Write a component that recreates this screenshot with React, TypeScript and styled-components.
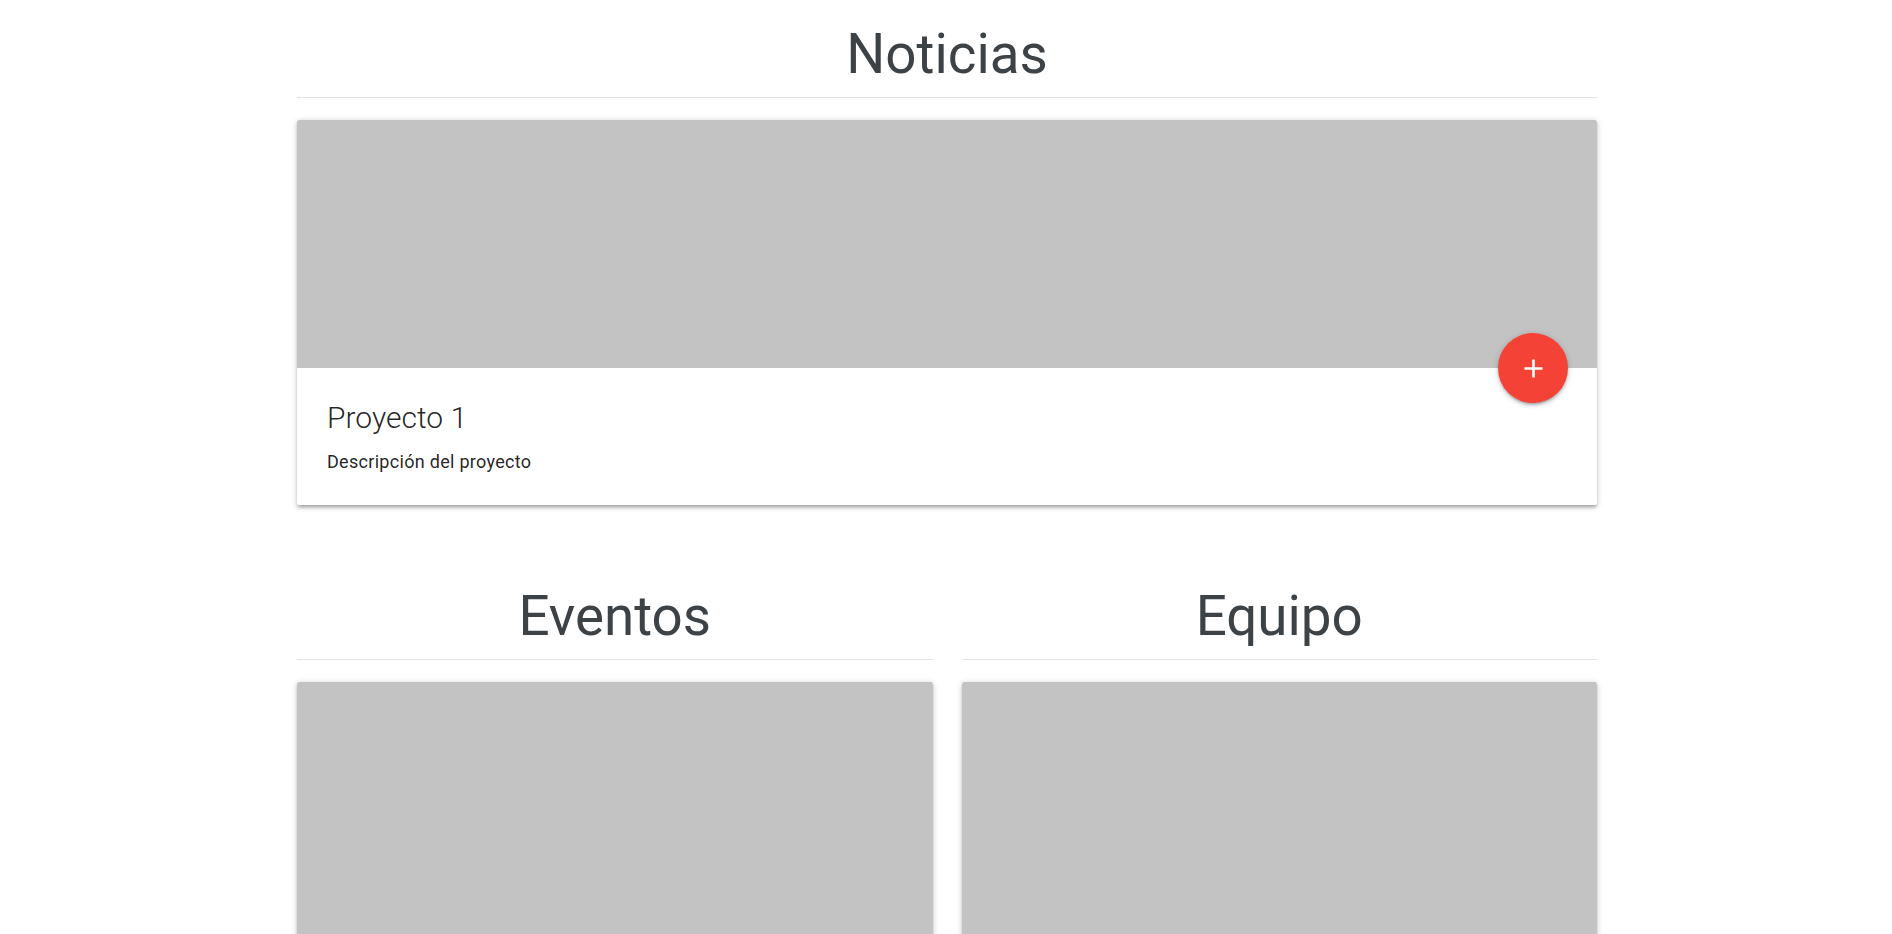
import React from "react";
import styled, { createGlobalStyle } from "styled-components";

const GlobalStyle = createGlobalStyle`
  html, body {
    margin: 0;
    padding: 0;
    background: #ffffff;
  }
  body {
    font-family: Roboto, "Noto Sans", "Liberation Sans", sans-serif;
    color: rgba(0, 0, 0, 0.87);
  }
  * { box-sizing: border-box; }
`;

const Page = styled.main`
  width: 1302px;
  margin: 0 auto;
  padding: 24px 0 0 2px;
`;

const Section = styled.section`
  display: flex;
  flex-direction: column;
  min-width: 0;
`;

const ColumnsRow = styled.div`
  display: grid;
  grid-template-columns: 1fr 1fr;
  column-gap: 29px;
  margin-top: 81px;
`;

const SectionTitle = styled.h3`
  margin: 0;
  font-size: 54.75px;
  line-height: 60px;
  font-weight: 400;
  text-align: center;
  color: #3d4246;
`;

const Divider = styled.hr`
  margin: 13px 0 0;
  border: none;
  height: 1px;
  background: #e3e3e3;
`;

const Card = styled.article`
  position: relative;
  margin-top: 22px;
  background: #ffffff;
  border-radius: 2.5px;
  box-shadow: 0 2.5px 2.5px 0 rgba(0, 0, 0, 0.14),
    0 3.75px 1.25px -2.5px rgba(0, 0, 0, 0.12),
    0 1.25px 6.25px 0 rgba(0, 0, 0, 0.2);
`;

const CardImage = styled.div<{ $height: number }>`
  position: relative;
  height: ${(p) => p.$height}px;
  background: #c3c3c3;
  border-radius: 2.5px 2.5px 0 0;
`;

const CardContent = styled.div`
  padding: 30px;
`;

const CardTitle = styled.span`
  display: block;
  font-size: 30px;
  font-weight: 300;
  line-height: 40px;
  margin-bottom: 10px;
  color: rgba(0, 0, 0, 0.87);
`;

const CardText = styled.p`
  margin: 0;
  font-size: 18px;
  letter-spacing: 0.3px;
  line-height: 27px;
  color: rgba(0, 0, 0, 0.87);
`;

const Fab = styled.button`
  position: absolute;
  right: 29px;
  bottom: -35px;
  width: 70px;
  height: 70px;
  border: none;
  border-radius: 50%;
  padding: 0;
  background: #f44336;
  display: flex;
  align-items: center;
  justify-content: center;
  cursor: pointer;
  box-shadow: 0 2.5px 2.5px 0 rgba(0, 0, 0, 0.14),
    0 3.75px 1.25px -2.5px rgba(0, 0, 0, 0.12),
    0 1.25px 6.25px 0 rgba(0, 0, 0, 0.2);
`;

const AddIcon = () => (
  <svg width="31" height="31" viewBox="0 0 24 24" aria-hidden="true">
    <path fill="#ffffff" d="M19 13h-6v6h-2v-6H5v-2h6V5h2v6h6v2z" />
  </svg>
);

export default function App() {
  return (
    <>
      <GlobalStyle />
      <Page>
        <Section>
          <SectionTitle>Noticias</SectionTitle>
          <Divider />
          <Card>
            <CardImage $height={248}>
              <Fab aria-label="Agregar">
                <AddIcon />
              </Fab>
            </CardImage>
            <CardContent>
              <CardTitle>Proyecto 1</CardTitle>
              <CardText>Descripción del proyecto</CardText>
            </CardContent>
          </Card>
        </Section>
        <ColumnsRow>
          <Section>
            <SectionTitle>Eventos</SectionTitle>
            <Divider />
            <Card>
              <CardImage $height={300} />
            </Card>
          </Section>
          <Section>
            <SectionTitle>Equipo</SectionTitle>
            <Divider />
            <Card>
              <CardImage $height={300} />
            </Card>
          </Section>
        </ColumnsRow>
      </Page>
    </>
  );
}
